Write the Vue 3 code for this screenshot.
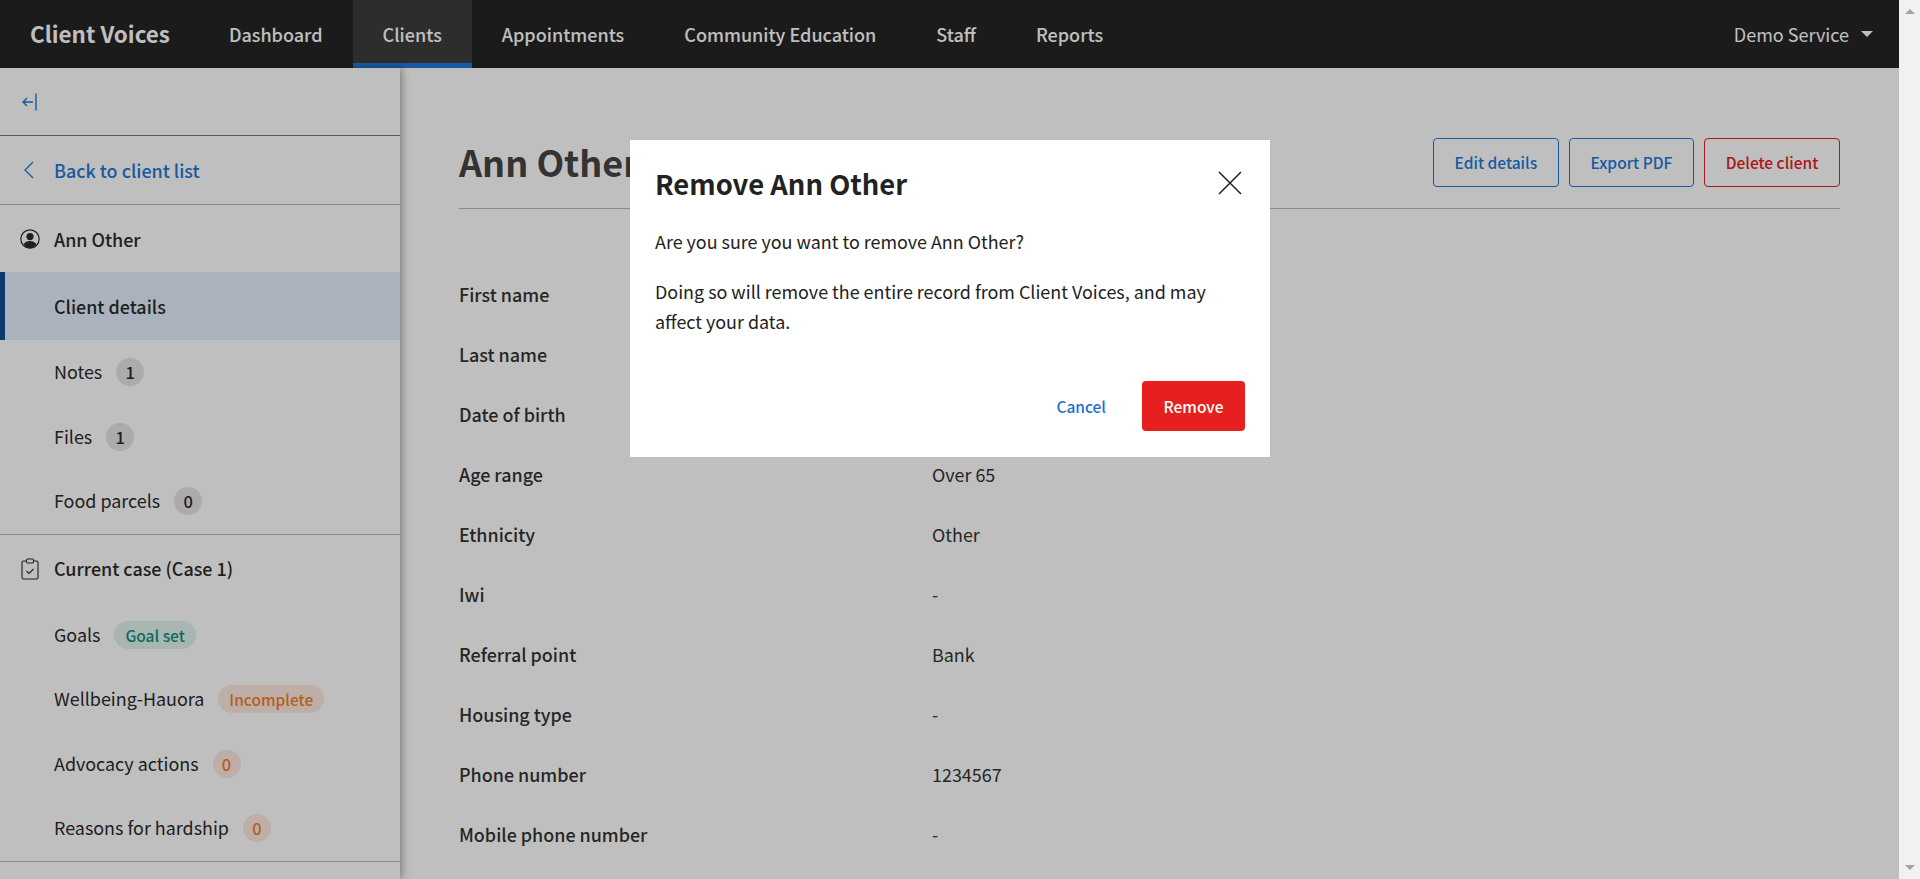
<script setup>
const nav = ['Dashboard', 'Clients', 'Appointments', 'Community Education', 'Staff', 'Reports']
const clientItems = [
  { label: 'Notes', badge: '1', tone: 'grey' },
  { label: 'Files', badge: '1', tone: 'grey' },
  { label: 'Food parcels', badge: '0', tone: 'grey' }
]
const caseItems = [
  { label: 'Goals', badge: 'Goal set', tone: 'green' },
  { label: 'Wellbeing-Hauora', badge: 'Incomplete', tone: 'orange' },
  { label: 'Advocacy actions', badge: '0', tone: 'orange' },
  { label: 'Reasons for hardship', badge: '0', tone: 'orange' }
]
const rows = [
  ['First name', 'Ann'],
  ['Last name', 'Other'],
  ['Date of birth', '01/01/1950'],
  ['Age range', 'Over 65'],
  ['Ethnicity', 'Other'],
  ['Iwi', '-'],
  ['Referral point', 'Bank'],
  ['Housing type', '-'],
  ['Phone number', '1234567'],
  ['Mobile phone number', '-']
]
</script>

<template>
  <div class="page">
    <div class="app">
      <header class="topbar">
        <div class="brand">Client Voices</div>
        <nav class="nav">
          <a v-for="item in nav" :key="item" class="nav-item" :class="{ active: item === 'Clients' }">{{ item }}</a>
        </nav>
        <div class="service">Demo Service<span class="caret"></span></div>
      </header>
      <div class="body">
        <aside class="sidebar">
          <div class="collapse">
            <svg width="16" height="18" viewBox="0 0 16 18" fill="none" stroke="#2179d8" stroke-width="1.4">
              <path d="M1 9h10M5 5L1 9l4 4" />
              <path d="M14 0.5v17" />
            </svg>
          </div>
          <div class="back">
            <svg class="side-icon" width="20" height="20" viewBox="0 0 20 20" fill="none" stroke="#2179d8" stroke-width="1.3">
              <path d="M13 2L5 10l8 8" />
            </svg>
            <span>Back to client list</span>
          </div>
          <div class="head person">
            <svg class="side-icon" width="20" height="20" viewBox="0 0 20 20">
              <circle cx="10" cy="10" r="9.2" fill="none" stroke="#2b2b2b" stroke-width="1.2" />
              <circle cx="10" cy="7.6" r="3.6" fill="#2b2b2b" />
              <path d="M3.6 15.4C5 12.8 7.4 12 10 12s5 .8 6.4 3.4A8.6 8.6 0 0 1 10 19.2a8.6 8.6 0 0 1-6.400-3.800z" fill="#2b2b2b" />
            </svg>
            <span>Ann Other</span>
          </div>
          <div class="side-item selected"><span>Client details</span></div>
          <div v-for="item in clientItems" :key="item.label" class="side-item">
            <span class="side-label">{{ item.label }}</span><span class="badge" :class="[item.tone, { wide: item.badge.length > 1 }]">{{ item.badge }}</span>
          </div>
          <div class="head section">
            <svg class="side-icon" width="20" height="22" viewBox="0 0 20 22" fill="none" stroke="#2b2b2b" stroke-width="1.1">
              <path d="M6.500 3H3.500a1.500 1.500 0 0 0-1.500 1.500v15a1.500 1.500 0 0 0 1.500 1.500h13a1.500 1.500 0 0 0 1.500-1.500v-15A1.500 1.500 0 0 0 16.500 3h-3" />
              <rect x="6.500" y="1" width="7" height="4" rx="1.200" />
              <path d="M6.500 13l2.500 2.500 4.500-4.500" />
            </svg>
            <span class="side-label">Current case (Case 1)</span>
          </div>
          <div v-for="item in caseItems" :key="item.label" class="side-item">
            <span class="side-label">{{ item.label }}</span><span class="badge" :class="[item.tone, { wide: item.badge.length > 1 }]">{{ item.badge }}</span>
          </div>
          <div class="side-end"></div>
        </aside>
        <main class="main">
          <div class="title-row">
            <h1>Ann Other</h1>
            <div class="actions">
              <button class="btn outline">Edit details</button>
              <button class="btn outline">Export PDF</button>
              <button class="btn outline danger">Delete client</button>
            </div>
          </div>
          <dl class="details">
            <div v-for="row in rows" :key="row[0]" class="row">
              <dt>{{ row[0] }}</dt>
              <dd>{{ row[1] }}</dd>
            </div>
          </dl>
        </main>
      </div>
      <div class="overlay"></div>
      <div class="modal">
        <div class="modal-head">
          <h2>Remove Ann Other</h2>
          <svg width="24" height="24" viewBox="0 0 24 24" fill="none" stroke="#1f1f1f" stroke-width="1.500">
            <path d="M1 1l22 22M23 1L1 23" />
          </svg>
        </div>
        <p>Are you sure you want to remove Ann Other?</p>
        <p>Doing so will remove the entire record from Client Voices, and may affect your data.</p>
        <div class="modal-foot">
          <button class="btn link">Cancel</button>
          <button class="btn solid">Remove</button>
        </div>
      </div>
    </div>
    <div class="scrollbar">
      <span class="arrow up"></span>
      <span class="arrow down"></span>
    </div>
  </div>
</template>

<style>
html, body { margin: 0; height: 100%; overflow: hidden; background: #fff; }
</style>

<style scoped>
.page {
  display: flex;
  height: 879px;
  font-family: "Noto Sans CJK SC", "Noto Sans", sans-serif;
  font-size: 17.920px;
  color: #333;
}
.app { position: relative; flex: 1; min-width: 0; overflow: hidden; background: #fff; }
.scrollbar {
  width: 21px;
  background: #f1f1f1;
  display: flex;
  flex-direction: column;
  justify-content: space-between;
  align-items: center;
  padding: 9px 0;
  box-sizing: border-box;
}
.arrow { width: 0; height: 0; border-left: 5px solid transparent; border-right: 5px solid transparent; }
.arrow.up { border-bottom: 5px solid #a3a3a3; }
.arrow.down { border-top: 5px solid #a3a3a3; }
.topbar {
  height: 68px;
  background: #252525;
  color: #fff;
  display: flex;
  align-items: stretch;
  padding: 0 26px 0 30px;
}
.brand { font-size: 22.400px; font-weight: 700; line-height: 66px; margin-right: 29px; }
.nav { display: flex; flex: 1; }
.nav-item {
  padding: 0 30px;
  font-size: 18px;
  line-height: 68px;
  font-weight: 500;
  box-sizing: border-box;
}
.nav-item.active { background: #3c3c3c; border-bottom: 5px solid #2179d8; }
.service { display: flex; align-items: center; font-size: 18px; gap: 12px; padding-bottom: 1px; }
.caret { width: 0; height: 0; border-left: 6px solid transparent; border-right: 6px solid transparent; border-top: 6px solid #fff; }
.body { display: flex; height: 811px; }
.sidebar {
  width: 400px;
  flex: none;
  background: #fff;
  box-shadow: 2px 0 8px rgba(0, 0, 0, .35);
  position: relative;
  color: #2b2b2b;
}
.collapse {
  height: 67px;
  display: flex;
  align-items: center;
  padding-left: 22px;
  border-bottom: 1px solid #777;
  box-sizing: content-box;
}
.back, .head {
  display: flex;
  align-items: center;
  padding-left: 20px;
  gap: 14px;
}
.side-icon { width: 20px; flex: none; }
.back { height: 68px; border-bottom: 1px solid #bbb; color: #2179d8; font-weight: 500; }
.head { height: 68px; font-weight: 500; }
.head.person { height: 67px; padding-top: 1px; box-sizing: border-box; }
.head.section { border-top: 1px solid #bbb; height: 68px; }
.side-label { margin-top: -2px; }
.side-item {
  height: 64.500px;
  display: flex;
  align-items: center;
  padding-left: 54px;
  gap: 14px;
  box-sizing: border-box;
}
.side-item.selected {
  height: 68px;
  background: #e3effc;
  border-left: 5px solid #0f4e93;
  padding-left: 49px;
  font-weight: 500;
}
.side-end { border-top: 1px solid #bbb; }
.badge {
  font-size: 16.500px;
  font-weight: 500;
  line-height: 28px;
  width: 28px;
  text-align: center;
  border-radius: 14px;
  box-sizing: border-box;
}
.badge.wide { width: auto; padding: 0 11px; font-size: 15.500px; }
.badge.grey { background: #e5e5e5; }
.badge.green { background: #e2f2ed; color: #0f8f7e; }
.badge.orange { background: #fdeadf; color: #f57c2a; }
.main { flex: 1; min-width: 0; padding: 70px 59px 0; box-sizing: border-box; }
.title-row {
  display: flex;
  justify-content: space-between;
  align-items: center;
  padding-bottom: 21px;
  border-bottom: 1px solid #bbb;
}
h1 { margin: 0 0 3px; font-size: 36px; font-weight: 700; line-height: 46px; color: #444; }
.actions { display: flex; gap: 10px; }
.btn {
  font: inherit;
  font-size: 15.500px;
  font-weight: 500;
  height: 49px;
  padding: 0 20.700px 2px;
  border-radius: 4px;
  background: transparent;
  border: 1px solid transparent;
  box-sizing: border-box;
}
.outline { border-color: #2179d8; color: #2179d8; }
.outline.danger { border-color: #e5201f; color: #e5201f; }
.details { margin: 55px 0 0; }
.row { display: flex; height: 60px; align-items: center; }
dt { width: 473px; font-weight: 500; }
dd { margin: 0; }
.overlay { position: absolute; inset: 0; background: rgba(0, 0, 0, .25); }
.modal {
  position: absolute;
  top: 140px;
  left: 630px;
  width: 640px;
  height: 317px;
  background: #fff;
  padding: 23px 25px 25px;
  box-sizing: border-box;
  color: #222;
  line-height: 30px;
}
.modal-head { display: flex; justify-content: space-between; align-items: center; height: 40px; margin-bottom: 23px; padding-right: 3px; }
h2 { margin: 0; font-size: 27.400px; font-weight: 700; }
.modal p { margin: 0 0 20px; }
.modal-foot { position: absolute; right: 25px; bottom: 26px; display: flex; gap: 15px; align-items: center; }
.link { color: #1d6fcf; padding: 0 20px; height: 50px; }
.solid { background: #e5201f; color: #fff; height: 50px; width: 103px; padding: 0; }
</style>
